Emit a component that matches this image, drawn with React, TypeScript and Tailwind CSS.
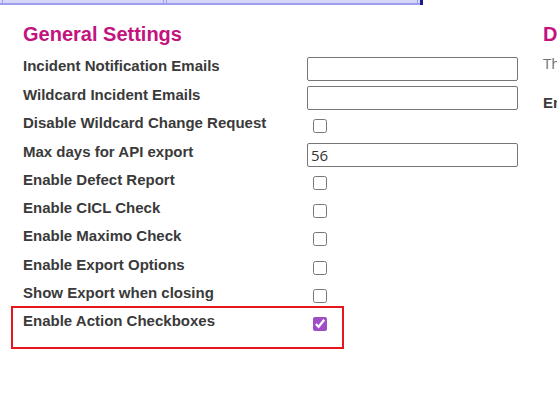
import React from 'react'

type Row = {
  label: string
  kind: 'text' | 'check'
  value?: string
  h: string
}

const rows: Row[] = [
  { label: 'Incident Notification Emails', kind: 'text', h: 'h-[29px]' },
  { label: 'Wildcard Incident Emails', kind: 'text', h: 'h-[28px]' },
  { label: 'Disable Wildcard Change Request', kind: 'check', h: 'h-[29px]' },
  { label: 'Max days for API export', kind: 'text', value: '56', h: 'h-[28px]' },
  { label: 'Enable Defect Report', kind: 'check', h: 'h-[28px]' },
  { label: 'Enable CICL Check', kind: 'check', h: 'h-[28px]' },
  { label: 'Enable Maximo Check', kind: 'check', h: 'h-[29px]' },
  { label: 'Enable Export Options', kind: 'check', h: 'h-[28px]' },
  { label: 'Show Export when closing', kind: 'check', h: 'h-[22px]' },
]

function Control({ row, checked }: { row: Row; checked?: boolean }) {
  if (row.kind === 'text') {
    return (
      <input
        type="text"
        defaultValue={row.value ?? ''}
        className="h-[24px] w-[211px] rounded-[2px] border border-[#767676] bg-white px-[3px] font-['Open_Sans',sans-serif] text-[15px] text-[#333] outline-none"
      />
    )
  }
  return (
    <input
      type="checkbox"
      defaultChecked={checked}
      className="ml-[6px] mt-[5px] h-[14px] w-[14px] accent-[#a04ec8]"
    />
  )
}

function SettingRow({ row, checked }: { row: Row; checked?: boolean }) {
  return (
    <div className={`flex items-start ${row.h}`}>
      <label className="w-[284px] shrink-0 pt-[1px] text-[15px] font-bold leading-[16px] text-[#3a3a3a]">
        {row.label}
      </label>
      <Control row={row} checked={checked} />
    </div>
  )
}

export default function App() {
  return (
    <div className="h-[408px] w-[557px] overflow-hidden bg-white font-['Liberation_Sans',Arial,sans-serif]">
      <div className="flex h-[5px] w-[423px]">
        <div className="flex flex-1 border-b-2 border-[#9d9df2] bg-[#d6d6f8]">
          <div className="w-[3px] border-r border-[#9d9df2]" />
          <div className="w-[161px] border-r border-[#9d9df2]" />
          <div className="w-[3px] border-r border-[#9d9df2]" />
          <div className="w-[251px] border-r border-[#9d9df2]" />
          <div className="flex-1" />
        </div>
        <div className="w-[3px] bg-[#1c1c8a]" />
      </div>

      <div className="flex pl-[23px]">
        <div className="w-[520px] shrink-0">
          <h2 className="mt-[19px] text-[20px] font-bold leading-[20px] text-[#c3137e]">General Settings</h2>
          <div className="mt-[13px]">
            {rows.map((r) => (
              <SettingRow key={r.label} row={r} />
            ))}
            <div className="ml-[-12px] h-[43px] w-[333px] border-2 border-[#e8161c] pl-[10px] pt-[4px]">
              <SettingRow
                row={{ label: 'Enable Action Checkboxes', kind: 'check', h: 'h-[28px]' }}
                checked
              />
            </div>
          </div>
        </div>

        <div className="w-[300px] shrink-0">
          <h2 className="mt-[19px] whitespace-nowrap text-[20px] font-bold leading-[20px] text-[#c3137e]">
            Display Settings
          </h2>
          <p className="mt-[9px] whitespace-nowrap font-['Open_Sans',sans-serif] text-[15px] leading-[20px] text-[#707070]">
            These options change how the dashboard looks.
          </p>
          <p className="mt-[22px] whitespace-nowrap text-[15px] font-bold leading-[16px] text-[#3a3a3a]">
            Enable Dark Mode
          </p>
        </div>
      </div>
    </div>
  )
}
